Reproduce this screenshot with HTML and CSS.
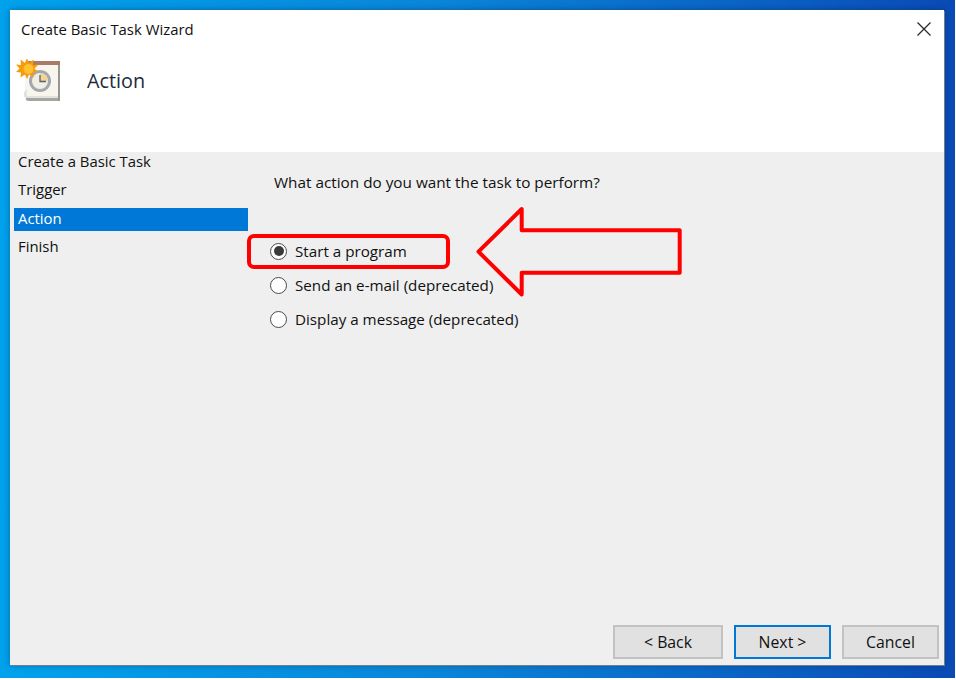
FILE: index.html
```html
<!DOCTYPE html>
<html lang="en">
<head>
<meta charset="utf-8">
<title>Create Basic Task Wizard</title>
<link rel="stylesheet" href="styles.css">
</head>
<body>
<div class="desktop">
  <div class="window">
    <header class="head">
      <div class="titlebar">
        <span class="title">Create Basic Task Wizard</span>
        <svg class="close" width="16" height="16" viewBox="0 0 16 16"><path d="M1.5 1.5 14.5 14.5M14.5 1.5 1.5 14.5" stroke="#2b2b2b" stroke-width="1.3" fill="none"/></svg>
      </div>
      <div class="banner">
        <svg class="task-icon" width="46" height="44" viewBox="0 0 46 44">
          <path d="M9 2H44V41H9Z" fill="#f7f5ee"/>
          <path d="M10 38H44V42H12L10 41Z" fill="#a5a5a1"/>
          <path d="M8 33 11 30V37H42V39H11L8 38Z" fill="#e2e2df"/>
          <path d="M11 2H44V6H11Z" fill="#a67c66"/>
          <path d="M42 6H44V42H42Z" fill="#96968f"/>
          <circle cx="24" cy="22" r="11" fill="#a3a8ae"/>
          <circle cx="24" cy="22" r="8" fill="#f1eee4"/>
          <path d="M24 14A8 8 0 0 1 32 22H24Z" fill="#f0d596"/>
          <path d="M24 16V22.500H30" stroke="#56606e" stroke-width="1.300" fill="none"/>
          <path d="M11 -1 13 4 17.500 .5 17 6 22.500 5.500 18.500 9.500 22 13 17 13.500 17.500 18.500 13 15.500 11 20 9 15.500 4.500 18.500 5 13.500 0 13 3.500 9.500 0 5.500 5 6 4.500 .5 9 4Z" fill="#f79a0c"/>
          <circle cx="12.500" cy="10" r="5" fill="#ffc233"/>
        </svg>
        <h1 class="heading">Action</h1>
      </div>
    </header>
    <div class="body">
      <nav class="steps">
        <div class="step">Create a Basic Task</div>
        <div class="step">Trigger</div>
        <div class="step current">Action</div>
        <div class="step">Finish</div>
      </nav>
      <main class="content">
        <p class="question">What action do you want the task to perform?</p>
        <div class="options">
          <label class="option"><span class="radio checked"></span>Start a program</label>
          <label class="option"><span class="radio"></span>Send an e-mail (deprecated)</label>
          <label class="option"><span class="radio"></span>Display a message (deprecated)</label>
        </div>
        <div class="highlight"></div>
        <svg class="arrow" width="210" height="94" viewBox="0 0 210 94">
          <path d="M2.500 45.700 45.700 3V24.300H203.700V66.700H45.700V88.500Z" fill="none" stroke="#fe0000" stroke-width="4" stroke-linejoin="round"/>
        </svg>
      </main>
    </div>
    <footer class="buttons">
      <button class="btn">&lt; Back</button>
      <button class="btn primary">Next &gt;</button>
      <button class="btn cancel">Cancel</button>
    </footer>
  </div>
</div>
</body>
</html>
```

FILE: styles.css
```css
* { box-sizing: border-box; }
html, body { margin: 0; padding: 0; }
body { width: 956px; height: 680px; overflow: hidden; background: #fff; }
.desktop {
  width: 955px; height: 678px; padding: 10px 11px 13px 10px;
  background: linear-gradient(90deg, #00a2ec 0%, #0a86d8 45%, #0a5cc0 85%, #0a4ab4 100%);
}
.window {
  width: 934px; height: 655px; display: flex; flex-direction: column;
  background: #efefef; font-family: "Open Sans", "Noto Sans", sans-serif; font-size: 14.900px; color: #111;
  box-shadow: 1px 1px 0 #6f7f8c, 0 0 6px rgba(0, 30, 80, 0.45);
}
.head { height: 142px; background: #fff; flex: none; }
.titlebar { height: 40px; display: flex; align-items: center; justify-content: space-between; padding: 0 12px 2px 11px; }
.banner { display: flex; align-items: flex-start; padding-left: 6px; }
.task-icon { margin-top: 9px; flex: none; }
.heading { margin: 17px 0 0 25px; font-size: 19.800px; font-weight: 400; line-height: 28px; color: #1c2a3a; }
.body { flex: 1; display: flex; min-height: 0; }
.steps { width: 238px; padding: 0 0 0 4px; flex: none; margin-top: -1px; }
.step { height: 23px; margin-bottom: 5.300px; padding-left: 4px; line-height: 21px; }
.current { background: #0078d7; color: #fff; }
.content { flex: 1; position: relative; padding: 19px 0 0 26px; }
.question { margin: 0; line-height: 22px; font-size: 15.300px; }
.options { margin-top: 47px; margin-left: -4px; display: flex; flex-direction: column; gap: 12px; font-size: 15.200px; }
.option { display: flex; align-items: center; height: 22px; gap: 8px; }
.radio { width: 17px; height: 17px; border: 1.500px solid #4a4a4a; border-radius: 50%; background: #fff; flex: none; position: relative; }
.radio.checked::after { content: ""; position: absolute; inset: 2.500px; border-radius: 50%; background: #3a3a3a; }
.highlight { position: absolute; left: -1px; top: 82px; width: 203px; height: 35px; border: 4px solid #fe0000; border-radius: 7px; }
.arrow { position: absolute; left: 228px; top: 54px; }
.buttons { flex: none; height: 40px; display: flex; justify-content: flex-end; gap: 11px; padding: 0 5px 6px 0; }
.btn { width: 110px; height: 34px; font: inherit; font-size: 15.800px; color: #111; background: #e1e1e1; border: 2px solid #c2c2c2; padding: 0; }
.primary { width: 97px; border-color: #0078d7; }
.cancel { width: 97px; }
```
